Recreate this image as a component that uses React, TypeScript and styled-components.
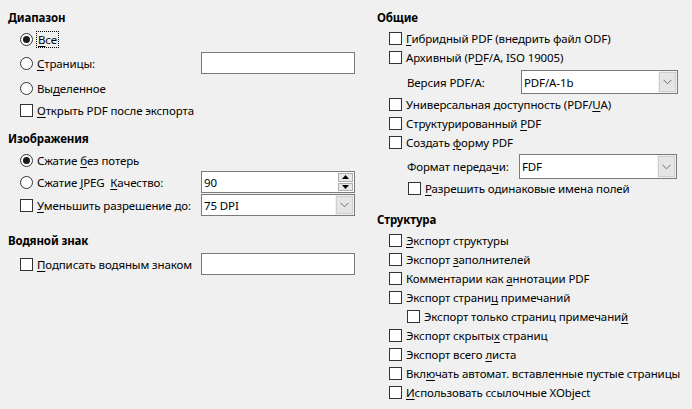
import React from "react";
import styled, { createGlobalStyle } from "styled-components";

const Global = createGlobalStyle`
  html, body { margin: 0; padding: 0; background: #f0f0f0; }
  body {
    font-family: "Noto Sans", "Open Sans", sans-serif;
    font-size: 11.5px;
    letter-spacing: -0.12px;
    color: #000;
  }
`;

const Page = styled.div`
  display: flex;
  width: 692px;
  height: 409px;
  box-sizing: border-box;
  padding: 9px 0 0 8px;
  background: #f0f0f0;
`;

const Column = styled.div<{ $width: number; $ml?: number }>`
  display: flex;
  flex-direction: column;
  width: ${(p) => p.$width}px;
  margin-left: ${(p) => p.$ml ?? 0}px;
`;

const Heading = styled.div<{ $mt?: number }>`
  font-weight: bold;
  height: 18px;
  line-height: 18px;
  margin-top: ${(p) => p.$mt ?? 0}px;
  white-space: nowrap;
`;

const Row = styled.div<{ $h: number; $indent: number; $mt?: number }>`
  display: flex;
  align-items: center;
  height: ${(p) => p.$h}px;
  padding-left: ${(p) => p.$indent}px;
  margin-top: ${(p) => p.$mt ?? 0}px;
  white-space: pre;
`;

const Key = styled.span`
  text-decoration: underline;
  text-underline-offset: 2px;
  text-decoration-thickness: 1px;
`;

const Box = styled.span`
  display: inline-block;
  flex: none;
  width: 11px;
  height: 11px;
  border: 1px solid #333;
  background: #fff;
  margin-right: 4px;
`;

const Radio = styled.span<{ $on?: boolean }>`
  position: relative;
  display: inline-block;
  flex: none;
  width: 11px;
  height: 11px;
  border: 1px solid #333;
  border-radius: 50%;
  background: #fff;
  margin-right: 4px;
  &::after {
    content: "";
    display: ${(p) => (p.$on ? "block" : "none")};
    position: absolute;
    left: 2px;
    top: 2px;
    width: 7px;
    height: 7px;
    border-radius: 50%;
    background: #1a1a1a;
  }
`;

const Focus = styled.span`
  outline: 1px dotted #000;
  outline-offset: 0px;
  padding: 0 1px;
`;

const Label = styled.span<{ $w?: number }>`
  display: inline-block;
  width: ${(p) => (p.$w ? `${p.$w}px` : "auto")};
  flex: none;
`;

const Spacer = styled.span`
  flex: 1;
`;

const Field = styled.div<{ $w: number; $h: number }>`
  display: flex;
  align-items: stretch;
  box-sizing: border-box;
  width: ${(p) => p.$w}px;
  height: ${(p) => p.$h}px;
  border: 1px solid #7a7a7a;
  background: #fff;
  flex: none;
`;

const FieldText = styled.span`
  flex: 1;
  display: flex;
  align-items: center;
  padding-left: 2px;
`;

const DropButton = styled.span`
  width: 17px;
  display: flex;
  align-items: center;
  justify-content: center;
  background: #e5e5e5;
  border: 1px solid #f0f0f0;
  box-shadow: inset 0 0 0 1px #cfcfcf;
`;

const SpinCol = styled.span`
  width: 17px;
  display: flex;
  flex-direction: column;
  padding: 1px;
  gap: 1px;
  box-sizing: border-box;
`;

const SpinBtn = styled.span`
  flex: 1;
  display: flex;
  align-items: center;
  justify-content: center;
  background: #e8e8e8;
  border: 1px solid #adadad;
`;

const Chevron = () => (
  <svg width="9" height="6" viewBox="0 0 9 6">
    <path d="M0.5 0.8 L4.5 4.8 L8.5 0.8" fill="none" stroke="#6d6d6d" strokeWidth="1" />
  </svg>
);

const Tri = ({ up }: { up?: boolean }) => (
  <svg width="7" height="4" viewBox="0 0 7 4">
    <path d={up ? "M0 4 L3.5 0 L7 4 Z" : "M0 0 L3.5 4 L7 0 Z"} fill="#000" />
  </svg>
);

const Combo = ({ w, h, value }: { w: number; h: number; value: string }) => (
  <Field $w={w} $h={h}>
    <FieldText>{value}</FieldText>
    <DropButton>
      <Chevron />
    </DropButton>
  </Field>
);

const Spin = ({ w, h, value }: { w: number; h: number; value: string }) => (
  <Field $w={w} $h={h}>
    <FieldText>{value}</FieldText>
    <SpinCol>
      <SpinBtn>
        <Tri up />
      </SpinBtn>
      <SpinBtn>
        <Tri />
      </SpinBtn>
    </SpinCol>
  </Field>
);

const Check = ({ children, indent, mt }: { children: React.ReactNode; indent: number; mt?: number }) => (
  <Row $h={19} $indent={indent} $mt={mt}>
    <Box />
    <span>{children}</span>
  </Row>
);

export default function App() {
  return (
    <>
      <Global />
      <Page>
        <Column $width={347}>
          <Heading>Диапазон</Heading>
          <Row $h={22} $indent={12} $mt={1}>
            <Radio $on />
            <Focus>
              <Key>В</Key>се
            </Focus>
          </Row>
          <Row $h={22} $indent={12} $mt={2}>
            <Radio />
            <Label>
              <Key>С</Key>траницы:
            </Label>
            <Spacer />
            <Field $w={154} $h={22} />
          </Row>
          <Row $h={22} $indent={12} $mt={3}>
            <Radio />
            <span>
              Вы<Key>д</Key>еленное
            </span>
          </Row>
          <Row $h={22} $indent={12}>
            <Box />
            <span>
              <Key>О</Key>ткрыть PDF после экспорта
            </span>
          </Row>

          <Heading $mt={9}>Изображения</Heading>
          <Row $h={22} $indent={12} $mt={1}>
            <Radio $on />
            <span>
              Сжатие <Key>б</Key>ез потерь
            </span>
          </Row>
          <Row $h={22} $indent={12}>
            <Radio />
            <Label>
              Сжатие <Key>J</Key>PEG  <Key>К</Key>ачество:
            </Label>
            <Spacer />
            <Spin w={154} h={22} value="90" />
          </Row>
          <Row $h={22} $indent={12} $mt={1}>
            <Box />
            <Label>
              <Key>У</Key>меньшить разрешение до:
            </Label>
            <Spacer />
            <Combo w={154} h={22} value="75 DPI" />
          </Row>

          <Heading $mt={16}>Водяной знак</Heading>
          <Row $h={22} $indent={12} $mt={3}>
            <Box />
            <Label>
              <Key>П</Key>одписать водяным знаком
            </Label>
            <Spacer />
            <Field $w={154} $h={22} />
          </Row>
        </Column>

        <Column $width={304} $ml={22}>
          <Heading>Общие</Heading>
          <Check indent={12} mt={2}>
            <Key>Г</Key>ибридный PDF (внедрить файл ODF)
          </Check>
          <Check indent={12}>
            Архивный (P<Key>D</Key>F/A, ISO 19005)
          </Check>
          <Row $h={24} $indent={30} $mt={3}>
            <Label $w={114}>Версия PDF/A:</Label>
            <Combo w={157} h={24} value="PDF/A-1b" />
          </Row>
          <Check indent={12} mt={1}>
            Универсальная доступность (PDF/<Key>U</Key>A)
          </Check>
          <Check indent={12}>
            Структурированный <Key>P</Key>DF
          </Check>
          <Check indent={12}>
            Создать <Key>ф</Key>орму PDF
          </Check>
          <Row $h={25} $indent={30} $mt={2}>
            <Label $w={112}>
              Формат переда<Key>ч</Key>и:
            </Label>
            <Combo w={158} h={25} value="FDF" />
          </Row>
          <Check indent={31}>
            <Key>Р</Key>азрешить одинаковые имена полей
          </Check>

          <Heading $mt={13}>Структура</Heading>
          <Check indent={12} mt={2}>
            <Key>Э</Key>кспорт структуры
          </Check>
          <Check indent={12}>
            Экспорт <Key>з</Key>аполнителей
          </Check>
          <Check indent={12}>
            Комментарии как <Key>а</Key>ннотации PDF
          </Check>
          <Check indent={12}>
            Экспорт страни<Key>ц</Key> примечаний
          </Check>
          <Check indent={30}>
            Экспорт только страниц примечани<Key>й</Key>
          </Check>
          <Check indent={12}>
            Экспорт скрыты<Key>х</Key> страниц
          </Check>
          <Check indent={12}>
            Экспорт всего <Key>л</Key>иста
          </Check>
          <Check indent={12}>
            Вкл<Key>ю</Key>чать автомат. вставленные пустые страницы
          </Check>
          <Check indent={12}>
            <Key>И</Key>спользовать ссылочные XObject
          </Check>
        </Column>
      </Page>
    </>
  );
}
